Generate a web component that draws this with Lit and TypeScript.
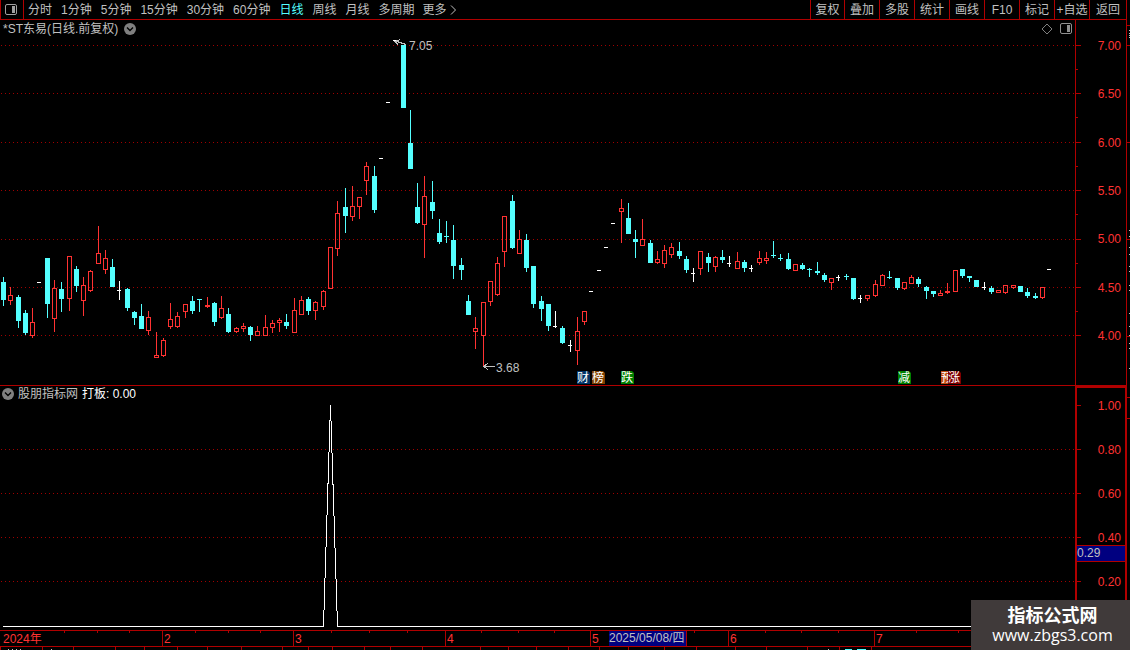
import { LitElement, html, svg, css } from "lit";
import { customElement, state } from "lit/decorators.js";
import { classMap } from "lit/directives/class-map.js";

type Kind = "U" | "D" | "W" | "-";
type Candle = [number, Kind, number, number, number, number];

// x, kind, high, body top, body bottom, low
const CANDLES: Candle[] = [
  [3, "D", 277, 282, 300, 306], [10, "U", 287, 295, 301, 305], [18, "D", 295, 297, 321, 328],
  [25, "D", 310, 313, 333, 335], [32, "U", 308, 322, 336, 338], [39, "-", 282, 282, 283, 283],
  [47, "D", 258, 258, 304, 318], [54, "U", 280, 288, 319, 332], [61, "D", 282, 289, 299, 312],
  [69, "U", 256, 256, 299, 311], [76, "D", 266, 269, 286, 292], [83, "U", 277, 285, 301, 316],
  [90, "U", 270, 271, 291, 292], [98, "U", 226, 253, 264, 264], [105, "U", 250, 258, 270, 274],
  [112, "D", 259, 267, 287, 287], [119, "W", 281, 290, 291, 300], [127, "D", 288, 289, 308, 311],
  [134, "D", 311, 312, 318, 325], [141, "D", 304, 316, 329, 329], [148, "U", 311, 317, 331, 335],
  [156, "U", 332, 355, 358, 358], [163, "U", 338, 340, 356, 357], [170, "U", 303, 319, 327, 329],
  [177, "U", 312, 316, 327, 328], [185, "U", 304, 304, 312, 318], [192, "D", 296, 301, 311, 314],
  [199, "D", 299, 299, 300, 312], [207, "U", 297, 305, 307, 308], [214, "D", 302, 303, 322, 326],
  [221, "U", 296, 308, 318, 319], [228, "D", 308, 314, 332, 333], [236, "U", 327, 328, 332, 333],
  [243, "U", 323, 326, 329, 332], [250, "D", 326, 327, 335, 341], [257, "U", 326, 331, 336, 336],
  [265, "U", 315, 327, 336, 336], [272, "U", 320, 323, 328, 333], [279, "U", 318, 320, 323, 332],
  [286, "D", 314, 322, 326, 329], [294, "U", 298, 310, 333, 333], [301, "U", 296, 300, 315, 315],
  [308, "D", 297, 299, 311, 315], [315, "U", 301, 302, 311, 320], [323, "U", 290, 291, 307, 310],
  [330, "U", 247, 247, 289, 289], [337, "U", 201, 213, 249, 256], [345, "D", 188, 207, 216, 233],
  [352, "U", 186, 206, 217, 221], [359, "U", 197, 197, 207, 219], [366, "U", 162, 166, 181, 195],
  [374, "D", 166, 176, 210, 213], [381, "-", 158, 158, 159, 159], [388, "-", 102, 102, 103, 103],
  [395, "-", 40, 40, 41, 41], [403, "D", 45, 45, 108, 108], [410, "D", 110, 143, 169, 169],
  [417, "D", 183, 207, 223, 224], [424, "U", 176, 196, 225, 258], [432, "D", 181, 202, 211, 219],
  [439, "D", 219, 233, 242, 244], [446, "D", 221, 236, 237, 243], [453, "D", 225, 240, 266, 279],
  [461, "D", 258, 265, 270, 280], [468, "D", 295, 301, 315, 315], [475, "U", 317, 328, 332, 349],
  [483, "U", 302, 302, 336, 366], [490, "U", 281, 281, 302, 306], [497, "U", 257, 263, 295, 296],
  [504, "U", 216, 216, 252, 267], [512, "D", 195, 201, 248, 249], [519, "U", 230, 239, 254, 254],
  [526, "D", 234, 240, 268, 272], [533, "D", 266, 266, 304, 308], [541, "D", 296, 301, 309, 321],
  [548, "D", 304, 304, 326, 331], [555, "W", 311, 326, 327, 328], [562, "D", 326, 328, 343, 344],
  [570, "W", 340, 345, 346, 352], [577, "U", 317, 331, 351, 365], [584, "U", 311, 311, 322, 325],
  [591, "-", 291, 291, 292, 292], [599, "-", 270, 270, 271, 271], [606, "-", 247, 247, 248, 248],
  [613, "-", 223, 223, 224, 224], [621, "U", 199, 208, 212, 243], [628, "D", 203, 218, 234, 234],
  [635, "D", 230, 239, 242, 258], [642, "U", 219, 239, 246, 246], [650, "D", 240, 243, 263, 263],
  [657, "U", 251, 259, 263, 264], [664, "U", 245, 250, 264, 268], [671, "U", 243, 247, 255, 258],
  [679, "D", 242, 251, 256, 259], [686, "D", 256, 259, 270, 273], [693, "W", 268, 273, 274, 282],
  [700, "U", 251, 251, 269, 275], [708, "D", 253, 257, 263, 272], [715, "U", 256, 257, 267, 272],
  [722, "D", 250, 257, 260, 263], [729, "W", 256, 263, 264, 267], [737, "U", 252, 261, 269, 269],
  [744, "D", 260, 262, 268, 272], [751, "W", 265, 268, 269, 272], [759, "U", 251, 258, 263, 265],
  [766, "U", 252, 258, 261, 264], [773, "D", 241, 255, 256, 258], [780, "D", 254, 258, 259, 261],
  [788, "D", 253, 259, 269, 270], [795, "U", 264, 264, 271, 271], [802, "D", 263, 265, 269, 270],
  [809, "D", 268, 269, 270, 277], [817, "D", 262, 271, 273, 275], [824, "D", 273, 275, 280, 282],
  [831, "U", 278, 278, 283, 290], [838, "W", 275, 277, 278, 281], [846, "D", 274, 276, 277, 280],
  [853, "D", 278, 278, 299, 300], [860, "W", 295, 298, 299, 303], [867, "U", 295, 295, 299, 301],
  [875, "U", 280, 284, 296, 297], [882, "U", 274, 275, 286, 286], [889, "D", 271, 277, 278, 279],
  [897, "D", 278, 278, 288, 290], [904, "U", 282, 282, 289, 290], [911, "U", 275, 277, 284, 284],
  [918, "D", 277, 279, 284, 287], [926, "D", 286, 287, 291, 299], [933, "D", 291, 291, 294, 297],
  [940, "U", 290, 293, 296, 296], [947, "U", 283, 291, 293, 294], [955, "U", 270, 270, 292, 292],
  [962, "D", 269, 269, 276, 278], [969, "D", 276, 276, 278, 282], [976, "D", 280, 280, 287, 287],
  [984, "W", 282, 287, 288, 290], [991, "D", 286, 288, 292, 294], [998, "U", 290, 290, 293, 293],
  [1005, "U", 285, 285, 293, 294], [1013, "U", 285, 285, 288, 289], [1020, "D", 286, 286, 292, 292],
  [1027, "D", 288, 292, 296, 298], [1035, "D", 293, 296, 298, 299], [1042, "U", 287, 287, 298, 299],
  [1049, "-", 269, 269, 270, 270],
];

const PRICES = ["7.00", "6.50", "6.00", "5.50", "5.00", "4.50", "4.00"];
const PRICE_LINES = [45, 93, 142, 190, 239, 287, 335];
const VALUES = ["1.00", "0.80", "0.60", "0.40", "0.20"];
const VALUE_LINES = [405, 449, 493, 537, 581];
const PERIODS = ["分时", "1分钟", "5分钟", "15分钟", "30分钟", "60分钟", "日线", "周线", "月线", "多周期"];
const ACTIONS = ["复权", "叠加", "多股", "统计", "画线", "F10", "标记", "+自选", "返回"];
const MONTHS: [string, number][] = [
  ["2024年", 162], ["2", 131], ["3", 152], ["4", 145], ["5", 138], ["6", 146], ["7", 256],
];
const WEEKS = [64, 97, 129, 195, 228, 260, 331, 369, 407, 481, 518, 554, 694, 765, 801, 838, 916, 958];
const FOOT = [0, 42, 73, 115, 144, 177, 207, 241, 282, 308, 332, 364, 390, 422, 480, 508, 536, 568,
  599, 628, 664, 696, 735, 766, 807, 839, 871];
const EDGE_MARKS = [30, 33, 35, 37, 230, 236, 247, 254, 266, 271, 285, 290, 313, 326, 335, 343, 348, 368];
const BADGES: [string, number, string][] = [
  ["财", 577, "navy"], ["榜", 592, "brown"], ["跌", 621, "green"],
  ["减", 898, "green"], ["预", 941, "orange"], ["涨", 948, "maroon"],
];
const CHART_W = 1075;

const candle = ([x, k, high, top, bottom, low]: Candle) => {
  if (k === "-") return svg`<rect class="w" x=${x - 2} y=${top} width="4" height="1" />`;
  if (k === "W")
    return svg`<rect class="w" x=${x} y=${high} width="1" height=${low - high} />
      <rect class="w" x=${x - 2} y=${top} width="4" height="1" />`;
  if (k === "D")
    return svg`<rect class="d" x=${x} y=${high} width="1" height=${low - high} />
      <rect class="d" x=${x - 2} y=${top} width="5" height=${bottom - top} />`;
  return svg`<rect class="u" x=${x} y=${high} width="1" height=${top - high} />
    <rect class="u" x=${x} y=${bottom} width="1" height=${low - bottom} />
    <rect class="box" x=${x - 1.5} y=${top + 0.5} width="4" height=${bottom - top - 1} />`;
};

@customElement("app-root")
export class AppRoot extends LitElement {
  @state() private period = "日线";

  static styles = css`
    :host {
      display: flex;
      flex-direction: column;
      position: relative;
      height: 100vh;
      overflow: hidden;
      background: #000;
      color: #c0c0c0;
      font: 12px/14px "Liberation Sans", "Noto Sans CJK SC", sans-serif;
    }
    * { box-sizing: border-box; }
    svg { display: block; }
    button {
      border: 0;
      padding: 0;
      background: none;
      color: inherit;
      font: inherit;
      line-height: 18px;
      white-space: nowrap;
      cursor: pointer;
    }
    .bar {
      flex: none;
      display: flex;
      height: 20px;
      margin-right: 3px;
      border: solid #b00000;
      border-width: 0 1px 1px;
    }
    .toggle {
      display: flex;
      align-items: center;
      width: 23px;
      padding-left: 4px;
      border-right: 1px solid #b00000;
    }
    .periods { display: flex; flex: 1; gap: 9px; padding-left: 4px; }
    .on { color: #54ffff; }
    .more { display: flex; align-items: center; gap: 2px; margin-left: -1px; }
    .actions { display: flex; }
    .actions button { width: 35px; border-left: 1px solid #b00000; }
    .actions button:first-child { width: 34px; }
    .actions button:last-child { width: 37px; }
    .panel { display: flex; min-height: 0; }
    .price { flex: 366 1 0; }
    .indicator { flex: 244 1 0; }
    .plot { position: relative; flex: 1; min-width: 0; }
    .price .plot, .price .axis { border-bottom: 1px solid #b00000; }
    .canvas { position: absolute; inset: 0; width: 100%; height: 100%; }
    .axis {
      position: relative;
      display: flex;
      flex-direction: column;
      justify-content: space-between;
      width: 52px;
      border: solid #b00000;
      border-width: 0 1px;
      padding: 19px 5px 42px 0;
      color: #ff3232;
      text-align: right;
    }
    .indicator .axis { border-width: 2px 2px 0; padding: 11px 4px 41px 0; }
    .edge { position: relative; width: 3px; }
    .title {
      position: relative;
      display: flex;
      align-items: center;
      gap: 6px;
      padding: 2px 3px;
    }
    .indicator .title { gap: 4px; padding: 1px 2px; }
    .tools { display: flex; gap: 7px; margin-left: auto; }
    .name { margin: 0; font: inherit; }
    .white { color: #fff; }
    .mark { position: absolute; }
    .badge {
      position: absolute;
      bottom: 1px;
      width: 13px;
      height: 13px;
      overflow: hidden;
      color: #fff;
      line-height: 14px;
      clip-path: polygon(0 0, 11px 0, 13px 2px, 13px 13px, 0 13px);
    }
    .navy { background: #003366; }
    .brown { background: #7f3f00; }
    .green { background: #008000; }
    .orange { width: 7px; background: #c04a10; }
    .maroon { background: #800000; }
    .cursor {
      position: absolute;
      left: 0;
      right: 0;
      height: 17px;
      border: solid #b00000;
      border-width: 1px 0;
      background: #000080;
      color: #c0c0c0;
      text-align: left;
    }
    .time {
      position: relative;
      flex: none;
      display: grid;
      height: 17px;
      border: solid #b00000;
      border-width: 1px 0;
      color: #ff3232;
    }
    .month { min-width: 0; padding-left: 1px; border-left: 1px solid #b00000; line-height: 16px; }
    .month:first-of-type { border-left: 0; padding-left: 3px; }
    .date {
      position: absolute;
      top: 0;
      width: 78px;
      height: 15px;
      border-right: 1px solid #b00000;
      background: #000080;
      color: #c0c0c0;
      white-space: nowrap;
    }
    .foot { position: relative; flex: none; height: 3px; }
    .watermark {
      position: absolute;
      right: 0;
      bottom: 0;
      width: 159px;
      height: 50px;
      padding: 4px 0 0 4px;
      background: #403a3a;
      color: #fff;
      text-align: center;
      font: 16px/20px "Open Sans", "Noto Sans", sans-serif;
    }
    .watermark strong { display: block; font: 700 18px/21px "Noto Sans CJK SC", sans-serif; }
    .u { fill: #ff3232; }
    .d { fill: #54ffff; }
    .w { fill: #fff; }
    .r { fill: #b00000; }
    .g { fill: #c0c0c0; }
    .box { fill: none; stroke: #ff3232; }
    .grid { stroke: #a00000; stroke-dasharray: 1 3; }
    .line { fill: none; stroke: #fff; }
    .arrow { fill: none; stroke: #c0c0c0; }
  `;

  private chevron() {
    return html`<svg width="12" height="12" viewBox="0 0 12 12">
      <circle cx="6" cy="6" r="6" fill="#808080" />
      <path d="M3 4.5 6 7.5 9 4.5" fill="none" stroke="#000" stroke-width="1.4" />
    </svg>`;
  }

  private layout(color: string) {
    return html`<svg width="12" height="12" viewBox="0 0 12 12">
      <rect x=".5" y=".5" width="11" height="10" rx="1.5" fill="none" stroke=${color} />
      <rect x="7" y="2" width="3" height="7" fill=${color} />
    </svg>`;
  }

  render() {
    return html`
      <header class="bar">
        <button class="toggle" aria-label="侧栏">${this.layout("#a0a0a0")}</button>
        <nav class="periods">
          ${PERIODS.map(
            (p) => html`<button class=${classMap({ on: p === this.period })} @click=${() => (this.period = p)}>${p}</button>`
          )}
          <button class="more">更多<svg width="8" height="10" viewBox="0 0 8 10">
            <path d="M2 .5 6.500 5 2 9.500" fill="none" stroke="#c0c0c0" /></svg></button>
        </nav>
        <div class="actions">${ACTIONS.map((a) => html`<button>${a}</button>`)}</div>
      </header>

      <section class="panel price">
        <div class="plot">
          <svg class="canvas" viewBox="0 20 1075 365" preserveAspectRatio="none" shape-rendering="crispEdges">
            ${PRICE_LINES.map((y) => svg`<line class="grid" x1="1" x2="1075" y1=${y + 0.5} y2=${y + 0.5} />`)}
            ${CANDLES.map(candle)}
            <path class="arrow" d="M394 41.500H397L406 44.500M395 41.500 400 39.500M395 41.500 398 44.500" />
            <path class="arrow" d="M483 366.500H495M484 366.500 488 363M484 366.500 488 370" />
          </svg>
          <div class="title">
            <h1 class="name">*ST东易(日线.前复权)</h1>
            ${this.chevron()}
            <div class="tools">
              <svg width="12" height="12" viewBox="0 0 12 12"><path d="M6 1 11 6 6 11 1 6Z" fill="none" stroke="#808080" /></svg>
              ${this.layout("#909090")}
            </div>
          </div>
          <span class="mark" style="left:${(409 / CHART_W) * 100}%;top:${(19 / 365) * 100}%">7.05</span>
          <span class="mark" style="left:${(496 / CHART_W) * 100}%;top:${(341 / 365) * 100}%">3.68</span>
          ${BADGES.map(([t, x, c]) => html`<span class="badge ${c}" style="left:${(x / CHART_W) * 100}%">${t}</span>`)}
        </div>
        <div class="axis">
          <svg class="canvas" viewBox="0 20 50 365" preserveAspectRatio="none" shape-rendering="crispEdges">
            ${PRICE_LINES.map((y) => svg`<rect class="r" x="0" y=${y} width="5" height="1" />
              ${y < 330 ? svg`<rect class="r" x="0" y=${y + 24} width="2" height="1" />` : ""}`)}
          </svg>
          ${PRICES.map((p) => html`<span>${p}</span>`)}
        </div>
        <div class="edge">
          <svg class="canvas" viewBox="0 20 3 366" preserveAspectRatio="none" shape-rendering="crispEdges">
            ${[25, 45, 142, 239, 336].map((y) => svg`<rect class="r" x="0" y=${y} width="3" height="1" />`)}
            ${EDGE_MARKS.map((y) => svg`<rect class="g" x="2" y=${y} width="1" height="1" />`)}
          </svg>
        </div>
      </section>

      <section class="panel indicator">
        <div class="plot">
          <svg class="canvas" viewBox="0 386 1075 244" preserveAspectRatio="none" shape-rendering="crispEdges">
            ${VALUE_LINES.slice(1).map((y) => svg`<line class="grid" x1="1" x2="1075" y1=${y + 0.5} y2=${y + 0.5} />`)}
            <polyline class="line" points="3,626.5 323.5,626.5 330.5,405 337.5,626.5 1050,626.5" />
          </svg>
          <div class="title">
            ${this.chevron()}
            <h2 class="name">股朋指标网</h2>
            <span class="white">打板: 0.00</span>
          </div>
        </div>
        <div class="axis">
          <svg class="canvas" viewBox="0 388 48 242" preserveAspectRatio="none" shape-rendering="crispEdges">
            ${VALUE_LINES.map((y) => svg`<rect class="r" x="0" y=${y} width="4" height="1" />`)}
          </svg>
          ${VALUES.map((v) => html`<span>${v}</span>`)}
          <span class="cursor" style="top:${((545 - 388) / 242) * 100}%">0.29</span>
        </div>
        <div class="edge">
          <svg class="canvas" viewBox="0 386 3 244" preserveAspectRatio="none" shape-rendering="crispEdges">
            ${[397, 418].map((y) => svg`<rect class="r" x="0" y=${y} width="3" height="1" />`)}
          </svg>
        </div>
      </section>

      <div class="time" style="grid-template-columns:${MONTHS.map(([, w]) => `${w}fr`).join(" ")}">
        <svg class="canvas" viewBox="0 0 1130 15" preserveAspectRatio="none" shape-rendering="crispEdges">
          ${WEEKS.map((x) => svg`<rect class="r" x=${x} y="0" width="1" height="2" />`)}
        </svg>
        ${MONTHS.map(([m]) => html`<span class="month">${m}</span>`)}
        <span class="date" style="left:${(609 / 1130) * 100}%">2025/05/08/四</span>
      </div>
      <div class="foot">
        <svg class="canvas" viewBox="0 0 1130 3" preserveAspectRatio="none" shape-rendering="crispEdges">
          ${FOOT.map((x) => svg`<rect class="r" x=${x} y="0" width="1" height="3" />`)}
          ${[8, 12, 16, 20, 51, 828].map((x) => svg`<rect class="g" x=${x} y="2" width="1" height="1" />`)}
          <rect class="d" x="845" y="2" width="7" height="1" /><rect class="d" x="857" y="2" width="9" height="1" />
        </svg>
      </div>
      <aside class="watermark"><strong>指标公式网</strong>www.zbgs3.com</aside>
    `;
  }
}
